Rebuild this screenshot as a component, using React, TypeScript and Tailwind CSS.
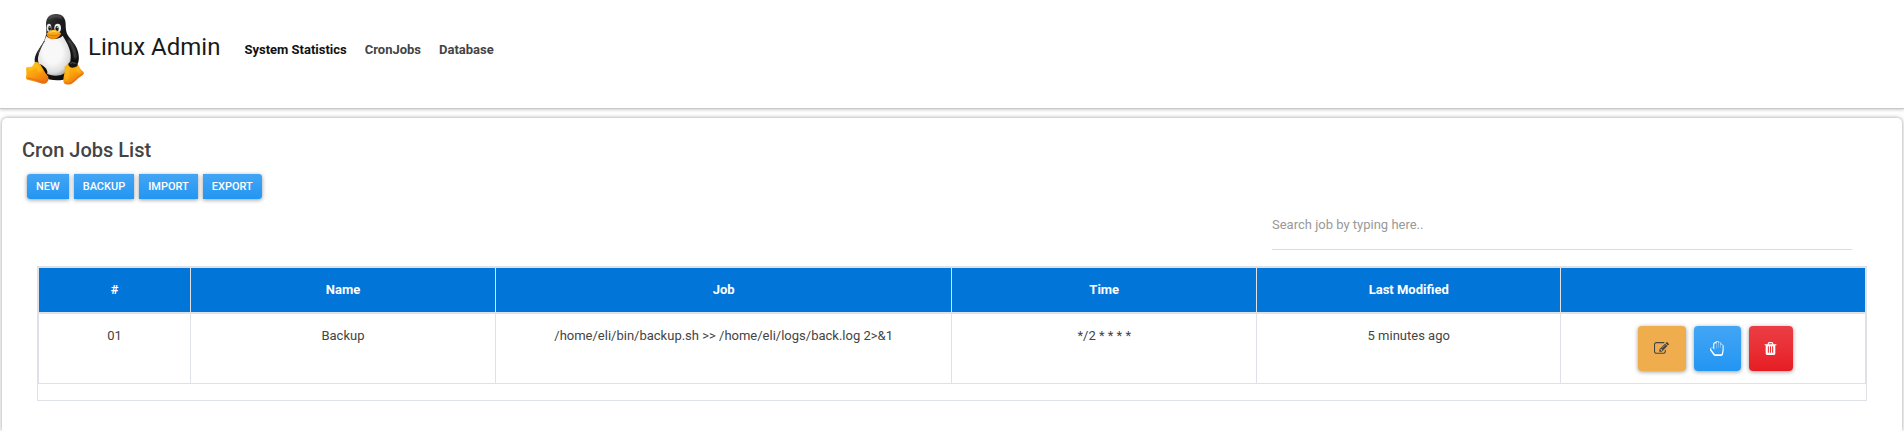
import React from "react";

function TuxLogo() {
  return (
    <svg viewBox="72 36 192 228" className="h-[76px] w-16 shrink-0" aria-hidden="true">
      <defs>
        <radialGradient id="belly" cx="0.45" cy="0.4" r="0.65">
          <stop offset="0.45" stopColor="#f8f8f8" />
          <stop offset="0.8" stopColor="#dedede" />
          <stop offset="1" stopColor="#a0a0a0" />
        </radialGradient>
        <linearGradient id="body" x1="0" y1="0" x2="1" y2="1">
          <stop offset="0" stopColor="#4a4a4a" />
          <stop offset="0.35" stopColor="#1c1c1c" />
          <stop offset="1" stopColor="#070707" />
        </linearGradient>
        <linearGradient id="foot" x1="0" y1="0" x2="0.6" y2="1">
          <stop offset="0" stopColor="#fbc012" />
          <stop offset="0.55" stopColor="#fba30c" />
          <stop offset="1" stopColor="#ee7313" />
        </linearGradient>
        <linearGradient id="beak" x1="0" y1="0" x2="0" y2="1">
          <stop offset="0" stopColor="#fcc324" />
          <stop offset="1" stopColor="#ee8206" />
        </linearGradient>
        <filter id="soft" x="-50%" y="-50%" width="200%" height="200%">
          <feGaussianBlur stdDeviation="3" />
        </filter>
      </defs>
      <path d="M138 72C138 53 150 42 168 42C187 42 197 54 197 72C197 87 198 98 205 108C215 123 229 135 234 155C238 171 238 185 230 197C222 213 216 225 205 234C187 244 148 243 132 232C116 221 103 199 104 177C106 159 120 143 129 128C136 116 139 105 139 94Z" fill="url(#body)" />
      <path d="M147 55C154 46 178 45 187 54" fill="none" stroke="#777" strokeWidth="7" opacity="0.6" filter="url(#soft)" />
      <path d="M139 108C149 120 176 120 188 107C195 119 207 136 211 157C216 183 206 211 190 222C176 230 151 228 138 219C121 207 112 187 114 174C117 154 132 126 139 108Z" fill="url(#belly)" />
      <path d="M205 119C218 136 226 154 226 175" fill="none" stroke="#8a8a8a" strokeWidth="6" opacity="0.6" filter="url(#soft)" />
      <path d="M114 161C118 148 127 133 134 123" fill="none" stroke="#4c4c4c" strokeWidth="3" />
      <ellipse cx="147" cy="83" rx="7" ry="12" fill="#e5e5e5" />
      <ellipse cx="173" cy="84" rx="10" ry="13" fill="#f0f0f0" />
      <ellipse cx="149" cy="85" rx="4" ry="7" fill="#171717" />
      <ellipse cx="171" cy="86" rx="5" ry="8" fill="#171717" />
      <circle cx="150" cy="82" r="1.6" fill="#eee" />
      <circle cx="172" cy="82" r="2" fill="#eee" />
      <path d="M139 101C144 96 151 89 161 89C171 90 178 95 183 100C182 108 169 118 159 118C151 118 141 110 139 101Z" fill="url(#beak)" />
      <path d="M140 102C151 109 170 109 183 101" fill="none" stroke="#c76b08" strokeWidth="2" />
      <path d="M149 98C155 92 165 93 170 97" fill="none" stroke="#ffda63" strokeWidth="3" />
      <path d="M116 192C125 192 144 207 142 218C140 227 130 218 122 207Z" fill="#0c0c0c" />
      <path d="M78 205Q78 202 83 202L94 201Q99 198 104 188Q108 183 113 187Q122 193 128 205Q136 221 144 229Q149 241 140 248Q132 254 122 250Q101 242 82 239Q75 236 79 225Q80 216 78 205Z" fill="url(#foot)" />
      <path d="M84 207Q99 207 108 195Q116 201 121 215" fill="none" stroke="#ffd132" strokeWidth="7" opacity="0.65" filter="url(#soft)" />
      <path d="M82 234Q105 237 128 246Q138 248 143 239" fill="none" stroke="#e36a12" strokeWidth="4" opacity="0.6" />
      <path d="M198 197Q204 186 219 187Q231 187 234 194L239 203Q244 212 251 216Q254 220 248 225Q234 234 220 248Q208 257 195 252Q188 248 191 231Q196 214 194 199Z" fill="url(#foot)" />
      <path d="M203 203Q203 223 199 240M230 204Q235 214 241 218" fill="none" stroke="#ffce31" strokeWidth="7" opacity="0.55" filter="url(#soft)" />
      <path d="M249 221Q232 232 216 247Q205 254 194 248" fill="none" stroke="#e36a12" strokeWidth="4" opacity="0.65" />
      <path d="M205 193C206 184 219 182 229 187C236 193 233 201 224 202C215 205 206 202 205 193Z" fill="#151515" />
      <path d="M211 190Q218 185 227 191" fill="none" stroke="#555" strokeWidth="3" />
    </svg>
  );
}

const editPath =
  "M888 1184l116-116-152-152-116 116v56h96v96h56zm440-720q-16-16-33 1l-350 350q-17 17-1 33t33-1l350-350q17-17 1-33zm80 594v190q0 119-84.5 203.5t-203.500 84.500h-832q-119 0-203.500-84.500t-84.500-203.500v-832q0-119 84.500-203.500t203.500-84.500h832q63 0 117 25 15 7 18 23 3 17-9 29l-49 49q-14 14-32 8-23-6-45-6h-832q-66 0-113 47t-47 113v832q0 66 47 113t113 47h832q66 0 113-47t47-113v-126q0-13 9-22l64-64q15-15 35-7t20 29zm-96-738l288 288-672 672h-288v-288zm444 132l-92 92-288-288 92-92q28-28 68-28t68 28l152 152q28 28 28 68t-28 68z";
const handPath =
  "M880 128q-46 0-79 33t-33 79v656h-32v-528q0-46-33-79t-79-33-79 33-33 79v528 160l-154-205q-38-51-102-51-53 0-90.500 37.500t-37.500 90.500q0 43 26 77l384 512q38 51 102 51h688q34 0 61-22t34-56l76-405q5-32 5-59v-498q0-46-33-79t-79-33-79 33-33 79v272h-32v-528q0-46-33-79t-79-33-79 33-33 79v528h-32v-656q0-46-33-79t-79-33zm0-128q68 0 125.500 35.500t88.500 96.500q19-4 42-4 99 0 169.500 70.500t70.500 169.500v17q105-6 180.500 64t75.500 175v498q0 40-8 83l-76 404q-14 79-76.500 131t-143.500 52h-688q-60 0-114.500-27.500t-90.500-74.500l-384-512q-51-68-51-154 0-106 75-181t181-75q78 0 128 34v-434q0-99 70.500-169.500t169.500-70.500q23 0 42 4 31-61 88.500-96.500t125.500-35.500z";
const trashPath =
  "M704 1376v-704q0-14-9-23t-23-9h-64q-14 0-23 9t-9 23v704q0 14 9 23t23 9h64q14 0 23-9t9-23zm256 0v-704q0-14-9-23t-23-9h-64q-14 0-23 9t-9 23v704q0 14 9 23t23 9h64q14 0 23-9t9-23zm256 0v-704q0-14-9-23t-23-9h-64q-14 0-23 9t-9 23v704q0 14 9 23t23 9h64q14 0 23-9t9-23zm-544-992h448l-48-117q-7-9-17-11h-317q-10 2-17 11zm928 32v64q0 14-9 23t-23 9h-96v948q0 83-47 143.500t-113 60.500h-832q-66 0-113-58.500t-47-141.500v-952h-96q-14 0-23-9t-9-23v-64q0-14 9-23t23-9h309l70-167q15-37 54-63t79-26h320q40 0 79 26t54 63l70 167h309q14 0 23 9t9 23z";

function Icon({ path }: { path: string }) {
  return (
    <svg viewBox="0 0 1792 1792" className="size-[15px] fill-current" aria-hidden="true">
      <path d={path} />
    </svg>
  );
}

const rowActions = [
  { label: "Edit", path: editPath, style: "w-12 bg-[#f0ad4e] text-[#444]" },
  { label: "Run", path: handPath, style: "w-[47px] bg-linear-to-b from-[#42a5f5] to-[#2196f3] text-white" },
  { label: "Delete", path: trashPath, style: "w-11 bg-linear-to-b from-[#eb3d44] to-[#e61c23] text-white" },
];

const columns = [
  { title: "#", width: "w-1/12" },
  { title: "Name", width: "w-2/12" },
  { title: "Job", width: "w-3/12" },
  { title: "Time", width: "w-2/12" },
  { title: "Last Modified", width: "w-2/12" },
  { title: "", width: "w-2/12" },
];

const jobs = [
  {
    id: "01",
    name: "Backup",
    command: "/home/eli/bin/backup.sh >> /home/eli/logs/back.log 2>&1",
    time: "*/2 * * * *",
    modified: "5 minutes ago",
  },
];

export default function App() {
  return (
    <div className="flex min-h-screen flex-col overflow-hidden bg-white font-['Roboto',sans-serif] text-[13px] leading-5 text-[#444]">
      <header className="flex items-start border-b border-[#c8c8c8] px-6 pt-3 pb-5 shadow-[0_1px_3px_rgba(0,0,0,0.2)]">
        <a href="#" className="flex text-2xl text-[#1a1a1a]">
          <TuxLogo />
          <span className="pt-[19px]">Linux Admin</span>
        </a>
        <nav className="flex gap-[18px] pt-7 pl-6 font-bold">
          <a href="#statistics" className="text-[#111]">System Statistics</a>
          <a href="#cronjobs">CronJobs</a>
          <a href="#database">Database</a>
        </nav>
      </header>

      <main className="mx-0.5 mt-[9px] flex-1 rounded-t-[5px] bg-white px-5 pt-5 pb-[30px] shadow-[0_0_4px_rgba(0,0,0,0.4)]">
        <h1 className="text-xl leading-6 font-medium">Cron Jobs List</h1>
        <div className="flex gap-[5px] pt-3 pl-[5px]">
          {["New", "Backup", "Import", "Export"].map((name) => (
            <button
              key={name}
              type="button"
              className="h-[25px] bg-linear-to-b from-[#42a5f5] to-[#2196f3] px-[9px] text-[11px] font-medium text-white uppercase shadow-[0_1px_4px_rgba(0,0,0,0.4)] first:rounded-l-[3px] last:rounded-r-[3px]"
            >
              {name}
            </button>
          ))}
        </div>

        <div className="flex justify-end pr-[30px]">
          <input
            type="search"
            aria-label="Search jobs"
            placeholder="Search job by typing here.."
            className="h-[51px] w-[580px] max-w-full border-b border-[#dcdcdc] outline-none placeholder:text-[#999]"
          />
        </div>

        <div className="mx-[15px] mt-4 border border-[#dee2e6] pb-4">
          <table className="w-full table-fixed border-collapse text-center">
            <thead>
              <tr className="h-[45px] bg-[#0275d8] text-white">
                {columns.map((column, i) => (
                  <th key={i} scope="col" className={`${column.width} border border-b-2 border-[#dee2e6] font-bold`}>
                    {column.title}
                  </th>
                ))}
              </tr>
            </thead>
            <tbody>
              {jobs.map((job) => (
                <tr key={job.id}>
                  {[job.id, job.name, job.command, job.time, job.modified].map((value, i) => (
                    <td key={i} className="border border-[#dee2e6] px-3 pt-3 align-top">
                      {value}
                    </td>
                  ))}
                  <td className="border border-[#dee2e6] py-3 align-top">
                    <div className="flex justify-center gap-2 pl-1">
                      {rowActions.map((action) => (
                        <button
                          key={action.label}
                          type="button"
                          aria-label={`${action.label} ${job.name}`}
                          className={`flex h-[45px] items-center justify-center rounded-[4px] shadow-[0_1px_4px_rgba(0,0,0,0.4)] ${action.style}`}
                        >
                          <Icon path={action.path} />
                        </button>
                      ))}
                    </div>
                  </td>
                </tr>
              ))}
            </tbody>
          </table>
        </div>
      </main>
    </div>
  );
}
